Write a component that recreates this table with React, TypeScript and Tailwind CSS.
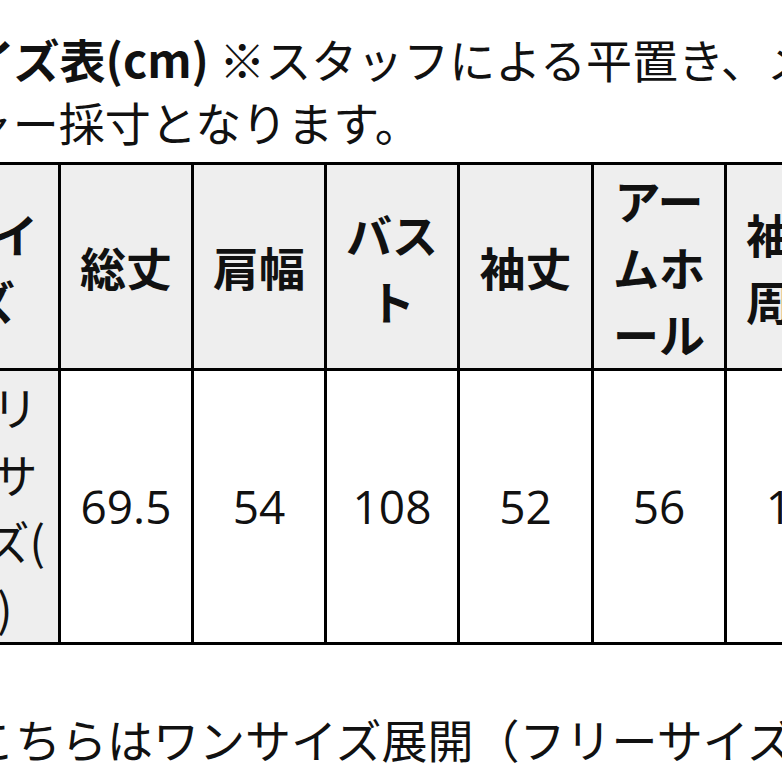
import React from "react";

const jp = "font-['Noto_Sans_CJK_JP','Noto_Sans',sans-serif]";

export default function App() {
  const headers = ["総丈", "肩幅", "バスト", "袖丈", "アームホール", "袖口周り"];
  const values = ["69.5", "54", "108", "52", "56", "18"];
  return (
    <div className="w-[782px] h-[782px] overflow-hidden bg-white text-[#111111]">
      <div className={`-ml-[77px] w-[1000px] pt-[27px] ${jp}`}>
        <p className="w-[910px] text-[46px] leading-[63px] [line-break:anywhere]">
          <span className="font-bold">サイズ表(cm)</span> ※スタッフによる平置き、メジャー採寸となります。
        </p>
        <table className="mt-[9px] border-collapse table-fixed w-[933px]">
          <colgroup>
            <col className="w-[135px]" />
            <col className="w-[133px]" />
            <col className="w-[133px]" />
            <col className="w-[133px]" />
            <col className="w-[134px]" />
            <col className="w-[133px]" />
            <col className="w-[133px]" />
          </colgroup>
          <thead>
            <tr>
              <th className="border-[3px] border-black bg-[#eeeeee] px-2 py-px text-[46px] leading-[67px] font-bold text-center align-middle [line-break:anywhere]">
                サイズ
              </th>
              {headers.map((h) => (
                <th
                  key={h}
                  className="border-[3px] border-black bg-[#eeeeee] px-2 py-px text-[46px] leading-[67px] font-bold text-center align-middle [line-break:anywhere]"
                >
                  {h}
                </th>
              ))}
            </tr>
          </thead>
          <tbody>
            <tr>
              <td className="border-[3px] border-black bg-[#eeeeee] px-2 py-[1.5px] text-[46px] leading-[67px] font-normal text-center align-middle [line-break:anywhere]">
                フリーサイズ(F)
              </td>
              {values.map((v, i) => (
                <td
                  key={i}
                  className="border-[3px] border-black bg-white px-2 py-[1.5px] text-[46px] leading-[67px] text-center align-middle font-['Open_Sans','Noto_Sans',sans-serif]"
                >
                  {v}
                </td>
              ))}
            </tr>
          </tbody>
        </table>
        <p className="mt-[62px] w-[910px] text-[46px] leading-[63px] [line-break:anywhere]">
          ※こちらはワンサイズ展開（フリーサイズ）です。
        </p>
      </div>
    </div>
  );
}
